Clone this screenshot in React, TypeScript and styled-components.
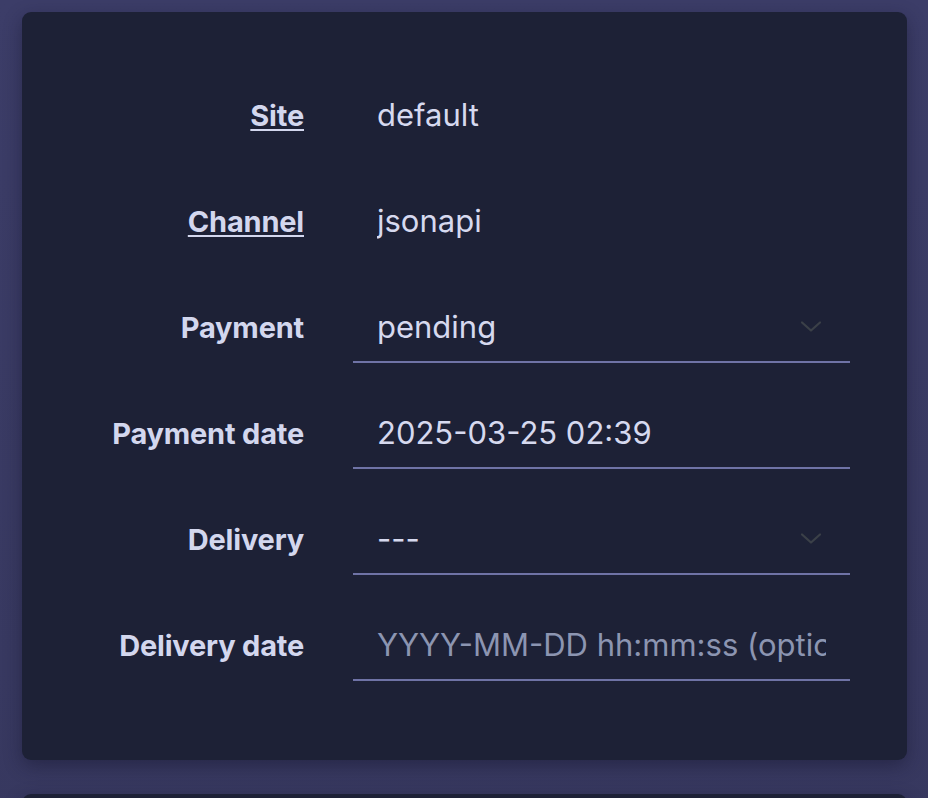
import React from "react";
import styled, { createGlobalStyle } from "styled-components";

const GlobalStyles = createGlobalStyle`
  * {
    box-sizing: border-box;
  }
  html, body {
    margin: 0;
    padding: 0;
    background: #3b3c66;
    font-family: Inter, "Noto Sans", sans-serif;
  }
`;

const Page = styled.div`
  min-height: 798px;
  padding: 12px 21px 0 22px;
  display: flex;
  flex-direction: column;
  gap: 34px;
  background: linear-gradient(180deg, #3c3d68 0%, #37385f 100%);
`;

const Card = styled.div`
  background: #1d2136;
  border-radius: 9px;
  box-shadow: 0 6px 18px rgba(20, 20, 45, 0.45);
  padding: 67px 0 79px;
  display: flex;
  flex-direction: column;
  gap: 34px;
`;

const NextCard = styled(Card)`
  padding: 0;
  height: 40px;
  border-radius: 9px 9px 0 0;
`;

const Row = styled.div`
  display: grid;
  grid-template-columns: 282px 497px;
  column-gap: 49px;
  align-items: center;
  height: 72px;
`;

const Label = styled.span<{ $link?: boolean }>`
  justify-self: end;
  font-size: 29px;
  font-weight: 700;
  letter-spacing: -0.2px;
  color: #d3d7ee;
  text-decoration: ${(p) => (p.$link ? "underline" : "none")};
  text-decoration-thickness: 2px;
  text-underline-offset: 3px;
`;

const Value = styled.div<{ $field?: boolean; $placeholder?: boolean }>`
  position: relative;
  height: 72px;
  display: flex;
  align-items: center;
  padding: 0 24px;
  font-size: 31px;
  color: ${(p) => (p.$placeholder ? "#8c95b1" : "#d6d9ef")};
  border-bottom: ${(p) => (p.$field ? "2px solid #6f73a6" : "2px solid transparent")};
`;

const Text = styled.span`
  flex: 1;
  white-space: nowrap;
  overflow: hidden;
`;

const Chevron = styled.svg`
  position: absolute;
  right: 28px;
  top: 29px;
  width: 22px;
  height: 14px;
`;

const Caret = () => (
  <Chevron viewBox="0 0 22 14" fill="none">
    <path d="M2 2.5 L11 10.5 L20 2.5" stroke="#3b4048" strokeWidth="2.2" strokeLinecap="round" strokeLinejoin="round" />
  </Chevron>
);

export default function App() {
  return (
    <>
      <GlobalStyles />
      <Page>
        <Card>
          <Row>
            <Label $link>Site</Label>
            <Value>
              <Text>default</Text>
            </Value>
          </Row>
          <Row>
            <Label $link>Channel</Label>
            <Value>
              <Text>jsonapi</Text>
            </Value>
          </Row>
          <Row>
            <Label>Payment</Label>
            <Value $field>
              <Text>pending</Text>
              <Caret />
            </Value>
          </Row>
          <Row>
            <Label>Payment date</Label>
            <Value $field>
              <Text>2025-03-25 02:39</Text>
            </Value>
          </Row>
          <Row>
            <Label>Delivery</Label>
            <Value $field>
              <Text>---</Text>
              <Caret />
            </Value>
          </Row>
          <Row>
            <Label>Delivery date</Label>
            <Value $field $placeholder>
              <Text>YYYY-MM-DD hh:mm:ss (optional)</Text>
            </Value>
          </Row>
        </Card>
        <NextCard />
      </Page>
    </>
  );
}
